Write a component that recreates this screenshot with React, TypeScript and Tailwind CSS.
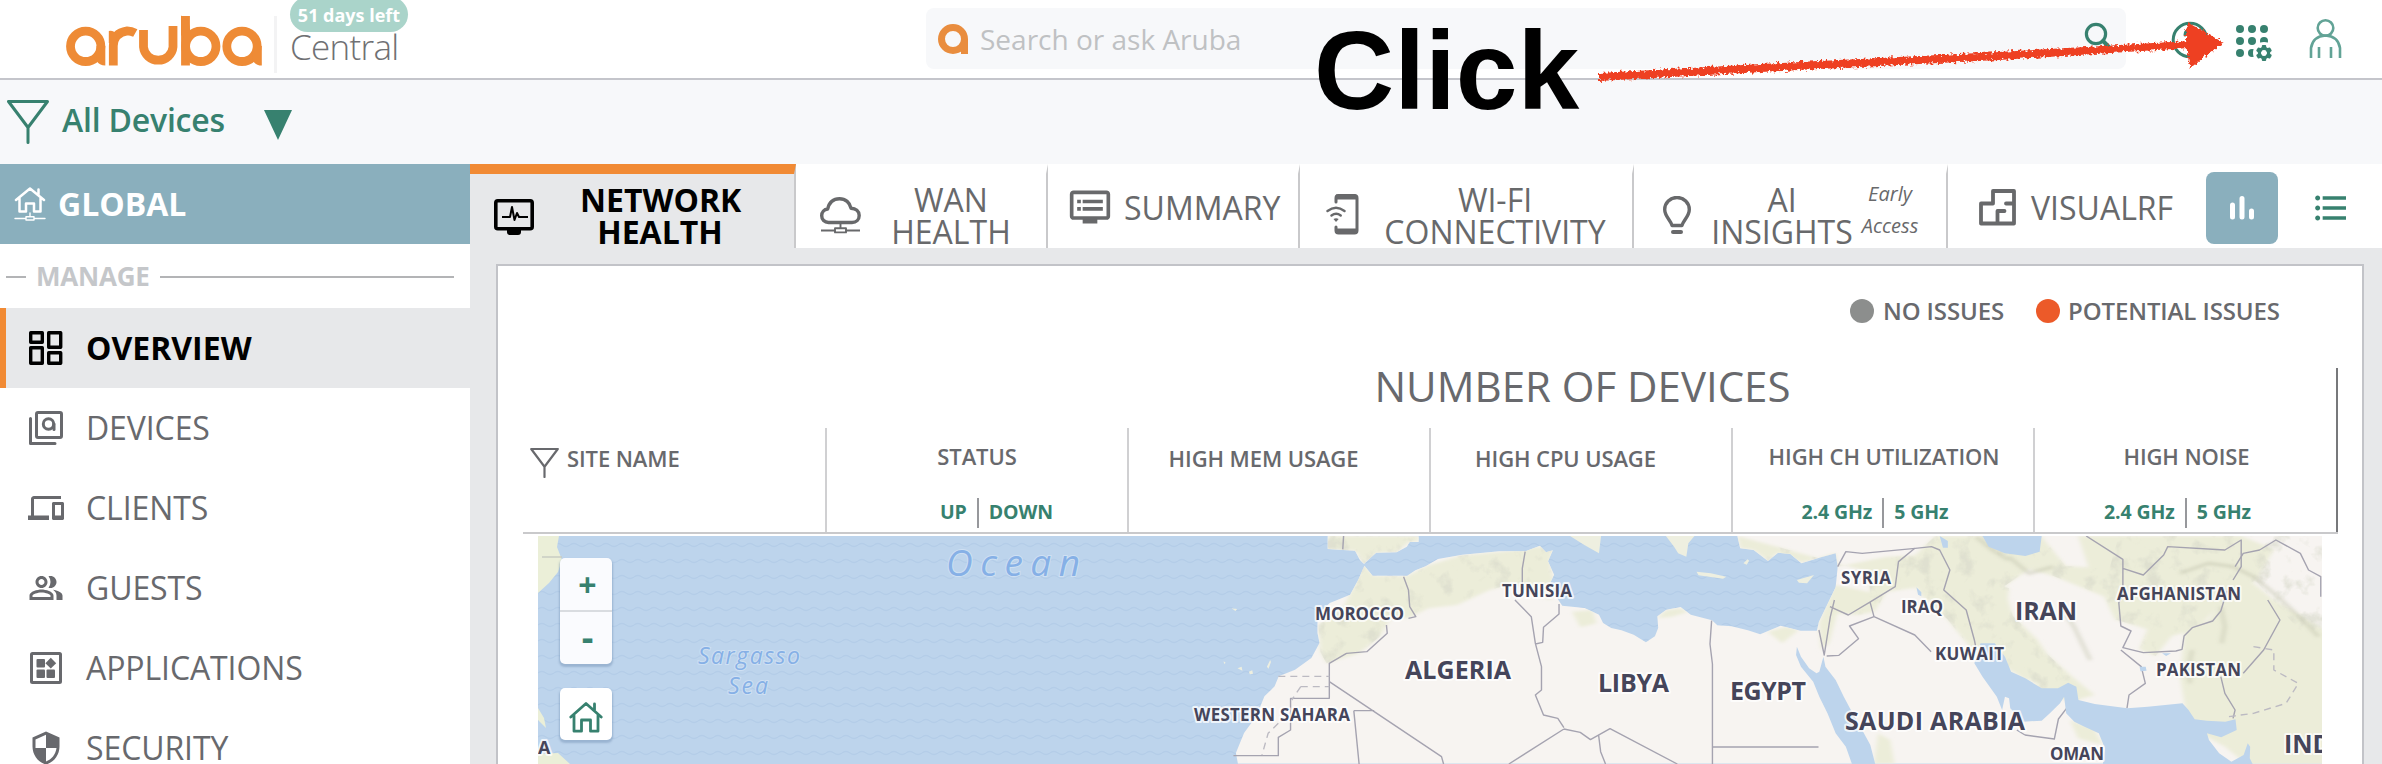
import type { ReactNode } from "react";
import { MdDvr, MdFormatListBulleted, MdOutlineDevices, MdOutlinePeopleAlt, MdSecurity } from "react-icons/md";

const font = "font-['Open_Sans','Noto_Sans',sans-serif]";

/* ---------- icons ---------- */

function ArubaLogo() {
  return (
    <svg width="198" height="52" viewBox="65 15 198 52" fill="none" stroke="#ee8b36" strokeWidth="8.8">
      <circle cx="85.7" cy="46.3" r="15.2" />
      <path d="M96.5 46h8.8v19.5q-6 0-9-5z" fill="#ee8b36" stroke="none" />
      <path d="M113.3 65.5V46q0-13 14-15.200 4 0 8 2.200" />
      <path d="M108.8 31q5-1 8 4v8h-8z" fill="#ee8b36" stroke="none" />
      <path d="M143.500 30v17a14.800 14.400 0 0 0 29.500 0V26" />
      <path d="M185.500 65.500V16" />
      <path d="M181 15.500q9 5 9 14v6h-9z" fill="#ee8b36" stroke="none" />
      <circle cx="200.800" cy="46.300" r="15.200" />
      <circle cx="242" cy="46.300" r="15.200" />
      <path d="M253 46h8.800v19.500q-6 0-9-5z" fill="#ee8b36" stroke="none" />
    </svg>
  );
}

function FunnelIcon({ size, color, sw }: { size: string; color: string; sw: number }) {
  return (
    <svg className={size} viewBox="0 0 42 44" fill="none" stroke={color} strokeWidth={sw} strokeLinejoin="round" strokeLinecap="round">
      <path d="M1.500 1.500h39L21 27.500zM21 27v15.500" />
    </svg>
  );
}

function HomeNetworkIcon() {
  return (
    <svg width="32" height="34" viewBox="14 187.500 32 34" fill="none" stroke="#fff" strokeWidth="2.500" strokeLinejoin="round" strokeLinecap="round">
      <path d="M16 200.500l14-11.500 14 11.500M38.500 195v-5M19.500 199v13h6.500v-8h8v8h6.500v-13" />
      <path d="M30 213.500v3.500M15 219h11M34 219h11M26 217.300h8v3.200h-8z" strokeWidth="1.400" />
    </svg>
  );
}

function OverviewIcon() {
  return (
    <svg width="36" height="36" viewBox="0 0 36 36" fill="none" stroke="#000" strokeWidth="3.400" strokeLinejoin="round">
      <path d="M2.700 2.700h11.600v9.600H2.700zM20.700 2.700h12v14.600h-12zM2.700 17.700h11.600v15.600H2.700zM20.700 22.700h12v10.600h-12z" />
    </svg>
  );
}

function DevicesIcon() {
  return (
    <svg width="36" height="36" viewBox="0 0 36 36" fill="none" stroke="#68696d" strokeWidth="3" strokeLinejoin="round" strokeLinecap="round">
      <rect x="8.500" y="2.500" width="25" height="25" rx="1.500" />
      <path d="M2.500 8.500v25h24.500" />
      <circle cx="20.500" cy="14" r="5.200" />
      <path d="M26 14v5.500" />
    </svg>
  );
}

function AppsIcon() {
  return (
    <svg width="34" height="34" viewBox="0 0 34 34">
      <rect x="2.500" y="2.500" width="29" height="29" rx="1" fill="none" stroke="#68696d" strokeWidth="3" />
      <g fill="#68696d">
        <rect x="7.500" y="8" width="8.500" height="8.500" rx="1" />
        <rect x="7.500" y="18.500" width="8.500" height="8.500" rx="1" />
        <rect x="17.500" y="18.500" width="8.500" height="8.500" rx="1" />
        <path d="M21.800 6.800l5.400 5.400-5.400 5.400-5.400-5.400z" />
      </g>
    </svg>
  );
}

function MonitorPulseIcon() {
  return (
    <svg width="40" height="37" viewBox="0 0 40 37" fill="none" stroke="#000">
      <rect x="1.800" y="1.800" width="36.400" height="28" rx="2" strokeWidth="3.600" />
      <path d="M13 30h14v3q0 3-3 3h-8q-3 0-3-3z" fill="#000" stroke="none" />
      <path d="M8 18h8l2-10 2.500 13 2.500-7 2 4h9" strokeWidth="2" strokeLinejoin="round" />
    </svg>
  );
}

function CloudIcon() {
  return (
    <svg width="41" height="37" viewBox="0 0 41 37" fill="none" stroke="#68696b" strokeLinejoin="round">
      <path d="M8.500 25.500c-4 0-6.800-3-6.800-6.800 0-3.700 2.500-6.300 6-6.700C9 6 13 1.700 19.500 1.700c6 0 10.500 4 11.500 9.600 4.800.2 8.200 3 8.200 7.200 0 4-3 7-7.200 7z" strokeWidth="3.400" />
      <path d="M20.500 26.500v4M1 33.500h14M26 33.500h14M15 31.200h11v4.200H15z" strokeWidth="1.900" />
    </svg>
  );
}

function PhoneWifiIcon() {
  return (
    <svg width="33" height="41" viewBox="0 0 33 41" fill="none" stroke="#68696b" strokeWidth="3" strokeLinecap="round">
      <path d="M10 8V4q0-2.500 2.500-2.500h16Q31 1.500 31 4v32.500q0 2.500-2.500 2.500h-16q-2.500 0-2.500-2.500V33" />
      <path d="M10 3h20M10 37h20" strokeWidth="5" strokeLinecap="butt" />
      <path d="M1.500 17q8.500-6.500 17 0M5.500 21.500q4.700-3.500 9.200 0" strokeWidth="2.400" />
      <path d="M7.500 25q2.600-1.600 5.200 0L10 28z" fill="#68696b" stroke="none" />
    </svg>
  );
}

function BulbIcon() {
  return (
    <svg width="28" height="39" viewBox="0 0 28 39" fill="none" stroke="#68696b" strokeWidth="3.400" strokeLinejoin="round">
      <path d="M9 29.500C8 24.500 1.700 20.500 1.700 13.500a12.300 12 0 0 1 24.600 0c0 7-6.300 11-7.300 16z" />
      <path d="M10 36h8" strokeLinecap="round" strokeWidth="4" />
    </svg>
  );
}

function FloorPlanIcon() {
  return (
    <svg width="37" height="37" viewBox="0 0 37 37" fill="none" stroke="#68696b" strokeWidth="3.800" strokeLinejoin="round">
      <path d="M2 14.500h12V2h21v32.500H2zM35 14.500h-8M18.500 34.500v-12.500h7" strokeLinecap="round" />
    </svg>
  );
}

function HouseIcon() {
  return (
    <svg width="34" height="32" viewBox="0 0 34 32" fill="none" stroke="#37816f" strokeWidth="2.800" strokeLinejoin="round" strokeLinecap="round">
      <path d="M1.800 16L17 2.500 32.200 16M25.500 9V3M5 14.500v15.700h7.500V19h9v11.200H29V14.500" />
    </svg>
  );
}

function AppGridIcon() {
  const teeth = [0, 60, 120, 180, 240, 300];
  return (
    <svg width="40" height="38" viewBox="2234 24 40 38" fill="#37816f">
      {[2240, 2252, 2264].map((x) => [29, 41, 53].map((y) => <circle key={`${x}-${y}`} cx={x} cy={y} r="4" />))}
      <circle cx="2264" cy="53" r="11" fill="#fff" />
      {teeth.map((a) => (
        <rect key={a} x="2261.800" y="45" width="4.400" height="5" rx="1" transform={`rotate(${a} 2264 53)`} />
      ))}
      <circle cx="2264" cy="53" r="4.600" fill="none" stroke="#37816f" strokeWidth="3.200" />
    </svg>
  );
}

/* ---------- top bars ---------- */

function Header() {
  return (
    <header className="flex h-[80px] border-b-2 border-[#c4c5cb] bg-white">
      <div className="mt-[15px] ml-[65px] h-[52px] w-[198px]">
        <ArubaLogo />
      </div>
      <div className="mt-[16px] ml-[11px] h-[57px] w-[3px] bg-[#f3f3f4]" />
      <div className="ml-[13px] w-[130px]">
        <div className="-mt-[3px] flex h-[35px] w-[118px] items-center justify-center rounded-full bg-[#aad4ca] pt-[2px] text-[18px] font-bold text-white">
          51 days left
        </div>
        <div className="mt-[-5px] text-[35px] leading-[40px] font-light tracking-[-0.7px] text-[#6f7073]">Central</div>
      </div>
      <div className="mt-[8px] ml-[506px] flex h-[61px] w-[1200px] rounded-[8px] bg-[#f7f8fa]">
        <svg className="mt-[16px] ml-[12px]" width="30" height="30" viewBox="0 0 30 30">
          <circle cx="15" cy="15" r="11.500" fill="none" stroke="#e98d3e" strokeWidth="7" />
          <path d="M23 15h7v15h-7z" fill="#e98d3e" />
        </svg>
        <div className="ml-[12px] text-[28px] leading-[62px] text-[#bfc1c3]">Search or ask Aruba</div>
        <svg className="mt-[14px] ml-auto mr-[12px]" width="32" height="34" viewBox="2082 22 32 34" fill="none" stroke="#37816f" strokeWidth="3.200">
          <circle cx="2096" cy="34" r="9.600" />
          <path d="M2103 41l9 9" strokeWidth="4" strokeLinecap="round" />
        </svg>
      </div>
      <svg className="mt-[21px] ml-[45px]" width="38" height="38" viewBox="2171 21 38 38" fill="none" stroke="#37816f" strokeWidth="3">
        <circle cx="2190" cy="40" r="16.800" />
        <path d="M2185 35q0-5 5-5t5 5q0 3-5 6v4" strokeLinecap="round" />
      </svg>
      <div className="mt-[24px] ml-[25px]">
        <AppGridIcon />
      </div>
      <svg className="mt-[18px] ml-[34px]" width="34" height="42" viewBox="2308 18 34 42" fill="none" stroke="#62a396" strokeWidth="2.600">
        <circle cx="2325.500" cy="28" r="7.800" />
        <path d="M2311 58V48q2-12 14.500-12.500Q2338 36 2340 48v10M2319 47v11M2331 47v11" />
      </svg>
    </header>
  );
}

function FilterBar() {
  return (
    <div className="flex h-[84px] bg-[#f7f8fa]">
      <div className="mt-[20px] ml-[7px]">
        <FunnelIcon size="h-[44px] w-[42px]" color="#37816f" sw={3} />
      </div>
      <div className="ml-[13px] w-[202px] text-[32px] leading-[80px] font-semibold tracking-[-0.2px] text-[#37816f]">All Devices</div>
      <svg className="mt-[30px]" width="28" height="30" viewBox="0 0 28 30">
        <path d="M0 0h28L14 30z" fill="#37816f" />
      </svg>
    </div>
  );
}

/* ---------- sidebar ---------- */

function NavItem({ icon, label, active = false }: { icon: ReactNode; label: string; active?: boolean }) {
  return (
    <div
      className={
        active
          ? "flex h-[80px] shrink-0 items-center border-l-[6px] border-[#f18a34] bg-[#e7e8ea] text-[32px] font-bold text-black"
          : "flex h-[80px] shrink-0 items-center border-l-[6px] border-transparent text-[32px] tracking-[-0.1px] text-[#68696d]"
      }
    >
      <div className="ml-[20px] flex w-[40px] items-center justify-center">{icon}</div>
      <div className="ml-[20px]">{label}</div>
    </div>
  );
}

function Sidebar() {
  return (
    <nav className="flex w-[470px] shrink-0 flex-col bg-white">
      <div className="flex h-[80px] shrink-0 items-center bg-[#8aafbd] pl-[14px]">
        <HomeNetworkIcon />
        <div className="ml-[12px] text-[32px] font-bold text-white">GLOBAL</div>
      </div>
      <div className="flex h-[64px] shrink-0 items-center pr-[16px] pl-[6px] text-[26px] font-bold text-[#c5c7ca]">
        <div className="mt-[2px] h-[2px] w-[20px] bg-[#b3b4b6]" />
        <div className="w-[134px] pl-[10px] leading-[64px] tracking-[-0.2px]">MANAGE</div>
        <div className="mt-[2px] h-[2px] flex-1 bg-[#b3b4b6]" />
      </div>
      <NavItem active icon={<OverviewIcon />} label="OVERVIEW" />
      <NavItem icon={<DevicesIcon />} label="DEVICES" />
      <NavItem icon={<MdOutlineDevices size={36} />} label="CLIENTS" />
      <NavItem icon={<MdOutlinePeopleAlt size={36} />} label="GUESTS" />
      <NavItem icon={<AppsIcon />} label="APPLICATIONS" />
      <NavItem icon={<MdSecurity size={36} />} label="SECURITY" />
    </nav>
  );
}

/* ---------- tabs ---------- */

function Tabs() {
  const tab = "flex shrink-0 border-t-[10px] border-r-2 border-t-white border-r-[#c9c9cb] text-center text-[32px] leading-[32px] text-[#68696b]";
  return (
    <div className="flex h-[84px] bg-white">
      <div className="flex w-[326px] shrink-0 border-t-[10px] border-r-2 border-t-[#f18a34] border-r-[#c9c9cb] bg-[#e7e8ea] text-center text-[32px] leading-[32px] font-bold text-black">
        <div className="mt-[25px] ml-[24px]"><MonitorPulseIcon /></div>
        <div className="mt-[10px] ml-[46px] w-[160px]">NETWORK HEALTH</div>
      </div>
      <div className={`${tab} w-[252px]`}>
        <div className="mt-[23px] ml-[24px]"><CloudIcon /></div>
        <div className="mt-[10px] ml-[30px] w-[120px]">WAN HEALTH</div>
      </div>
      <div className={`${tab} w-[252px]`}>
        <div className="mt-[11px] ml-[20px]"><MdDvr size={44} /></div>
        <div className="mt-[18px] ml-[12px]">SUMMARY</div>
      </div>
      <div className={`${tab} w-[334px]`}>
        <div className="mt-[20px] ml-[26px]"><PhoneWifiIcon /></div>
        <div className="mt-[10px] ml-[24px] w-[224px]">WI-FI CONNECTIVITY</div>
      </div>
      <div className={`${tab} w-[314px]`}>
        <div className="mt-[22px] ml-[29px]"><BulbIcon /></div>
        <div className="mt-[10px] ml-[20px] w-[142px]">AI INSIGHTS</div>
        <div className="mt-[4px] ml-[7px] w-[60px] text-[20px] italic">Early Access</div>
      </div>
      <div className="flex shrink-0 text-[32px] leading-[32px] text-[#68696b]">
        <div className="mt-[25px] ml-[31px]"><FloorPlanIcon /></div>
        <div className="mt-[28px] ml-[15px] w-[175px]">VISUALRF</div>
        <div className="mt-[8px] flex h-[72px] w-[72px] items-center justify-center rounded-[8px] bg-[#8aafbd]">
          <svg width="26" height="26" viewBox="0 0 26 26" stroke="#fff" strokeWidth="5" strokeLinecap="round">
            <path d="M3.500 10v12M13 3.500V22M22.500 16v6" />
          </svg>
        </div>
        <div className="mt-[24px] ml-[33px] text-[#37816f]"><MdFormatListBulleted size={40} /></div>
      </div>
    </div>
  );
}

/* ---------- map ---------- */

const labels: [string, number, number, number, number][] = [
  ["MOROCCO", 1315, 620, 89, 17],
  ["TUNISIA", 1502, 597, 70, 17],
  ["ALGERIA", 1405, 679, 106, 25],
  ["LIBYA", 1598, 692, 71, 25],
  ["EGYPT", 1730, 700, 76, 25],
  ["WESTERN SAHARA", 1194, 721, 156, 17],
  ["SYRIA", 1841, 584, 50, 17],
  ["IRAQ", 1901, 613, 42, 17],
  ["IRAN", 2015, 620, 62, 25],
  ["KUWAIT", 1935, 660, 69, 17],
  ["AFGHANISTAN", 2117, 600, 124, 17],
  ["PAKISTAN", 2156, 676, 85, 17],
  ["SAUDI ARABIA", 1845, 730, 180, 25],
  ["OMAN", 2050, 760, 54, 17],
  ["IND", 2284, 753, 47, 25],
  ["A", 538, 754, 12, 18],
];

const greenAreas = [
  "M500 195l25 32 80 2 50-32 80-30 100-12 95-15 30 10-2 60 10 40-10 50-50-20-40-30-60 20-80 45-70 10-50 30-40-5-30 60-50 50-80 30-15-35-5-80 60-50z",
  "M411 108v39l67 5 22 40 30-34 50-1 32-32 22-2v-15z",
  "M1010 335l50-5 10 40-40 12z",
  "M1218 355l22-25 35-5 20 10-40 15z",
  "M1490 395l45-15 30 10-40 40z",
  "M1415 108l7 37 33 5 35 33 25-25 57 30 84-28 5 40 120-30 100-5 120 20 20 60 60 20-10 100 70 60 90 100 60 60-60 20-70-30-110-160-60-80-30-120-60 40-120 20-30 60-40 10 30-60-5-70z",
  "M1650 255l30 5 90 25-60 60-50-5-20 90-20 20-5-80z",
  "M1900 108h260l60 90 130 10 10 60-30 30-140-70-60-20-60 50 20 90 60 70 60 110-20 30-70-20-80-60-50-30-60-90-70-80-20-100z",
  "M2350 108h300l80 40-40 90-60 40-50 60-40 50-60 20-40 60-40-20 20-60-80-30-30-80z",
  "M2250 108h200l-30 40-70 70-70 0z",
  "M2510 400l60-40 60-100 40-20 60 60 140 100v400h-200l-60-60-90-60-20-150z",
  "M2230 660l60 25 20 50-60-20z",
  "M1760 700l30 20 10 72h-50z",
];

const reliefAreas = [5, 7, 8, 0, 1].map((i) => greenAreas[i]).concat("M2630 108h220v320l-60-40-100-140-60-60z");

const ridges = [
  "M2500 220l70-30 60 10 50 30 60 60 60 70 40 50",
  "M2080 170l50 50 60-20",
  "M2210 320l30 60 40 100",
  "M2000 110l40 40 40 30",
  "M2600 320l10 60-8 50M2530 450l-10 60 5 40",
];

const borders = [
  "M450 108l-2 40",
  "M597 230l12 40 3 50 15 30-18 5",
  "M555 375l2 25-50 55-50 5-42 30v105h-95v95l-30 22v55h-110",
  "M415 545l275 225 5 22M475 632h50M475 632l13 160",
  "M895 155l-7 50 0 80M870 300l40 50 10 80 15 70v70l-15 15 20 60 35 10 15 28M978 312v30l-38 40-2 45-18 5",
  "M990 687l-135 105M990 687l40 10 25 22 48-33 165 106M1075 705l5 50 12 37",
  "M1352 362l-4 70 6 60v300M1354 741h260",
  "M1661 200l20-45 40 5 130-15 40-5 20 10 25 60-15 60 55 60 20 90 5 30",
  "M1850 145l-40 40-8 75-60 45-55 40-45-25M1740 305l10 45 100 55 40 50M1750 350l-60 28 22 38-48 50-30 2",
  "M1615 390l13 75 15-115 10-50",
  "M2120 705l72 12 10-60 25-40-5-35M2120 705l-20-15",
  "M2270 108l90 70v110l-10 20 5 70 25 15-20 50 50 15 80-5 15-5 5-40 20-25 50-20 20-30 15-60M2360 205l50 20 50-60 10-25 140 10 40-30 0 80-20 40",
  "M2355 450l50 50 10 50-40 35-5 40",
  "M2655 520l50-70 40-90-30-60M2600 530l10 50 25 50-5 25",
  "M2635 200l20-40 40-10 40-30 60 40 20 50 30 20 0 60",
];

const dashes = ["M290 529h125M345 560h70M345 560l-22 40M290 670l-25 30-15 65", "M2680 440l50 10 0 60 60 40-30 60-80 30-60 10"];

function WorldMap() {
  return (
    <svg className="block" width="1784" height="228" viewBox="538 536 1784 228">
      <defs>
        <pattern id="waves" width="16" height="16" patternUnits="userSpaceOnUse" patternTransform="translate(538 536)">
          <path d="M0 9q4-3 8 0t8 0" fill="none" stroke="#b4cde8" strokeWidth="1.300" />
        </pattern>
        <filter id="soft" x="-10%" y="-10%" width="120%" height="120%"><feGaussianBlur stdDeviation="5" /></filter>
        <filter id="relief" x="0" y="0" width="100%" height="100%">
          <feTurbulence type="fractalNoise" baseFrequency="0.022 0.018" numOctaves="4" seed="7" result="n" />
          <feColorMatrix in="n" values="0 0 0 0 0.680  0 0 0 0 0.690  0 0 0 0 0.590  0 4 0 0 -2.150" result="c" />
          <feComposite in="c" in2="SourceGraphic" operator="in" />
        </filter>
        <clipPath id="land">
          <path d="M411 108v39l67 5 12 28 10 12 12-14 18-20 50-1 25-17 7-14h22v-17zM1415 108l7 37 33 5 35 33 25-25 30 4 27 28 48-18 36-12 5 40-5 62-21 53-20 50-5 27h-40l-49-15-50 26-30-12-40-12-35-3-13-15-52-17-25-23-35 8-22 20 2 35-8 25-22 18-30-23-30-13-25-7-20-15-10-25-35-20-55-7-10-18-20-50 10-25-15-40 12-33-17 6-15-20-35 17-65 0-90 10-60 13-30 22-25 12-20 16-15 0h-70l-20-30-15 42-20 45-50 25-30 35v55l5 30-20 45-40 35-40 20-10 30-25 30-20 60-30 50-20 60 5 32h2710v-684z" />
        </clipPath>
      </defs>
      <rect x="538" y="536" width="1784" height="228" fill="#bdd4ec" />
      <rect x="538" y="536" width="1784" height="228" fill="url(#waves)" />
      <g transform="translate(1160 500) scale(0.408 0.33333)">
        <g clipPath="url(#land)">
          <rect x="180" y="100" width="2800" height="700" fill="#f7f4f1" />
          <g filter="url(#soft)" fill="#ecedd9">
            {greenAreas.map((d) => <path key={d} d={d} />)}
          </g>
          <g filter="url(#relief)" opacity="0.600">
            {reliefAreas.map((d) => <path key={d} d={d} />)}
          </g>
          <g fill="none" stroke="#c3c4ae" strokeWidth="10" opacity="0.500" filter="url(#soft)">
            {ridges.map((d) => <path key={d} d={d} />)}
          </g>
        </g>
        <g fill="#eeefe0">
          <path d="M1005 108l35 27 36 25 5-52zM1240 108l20 32 10 20 20 10 5-40 15-22z" />
          <path d="M1315 215l35 5 38 10-8 6-60-10zM1561 240l42-15-17 25-20-2zM1430 190l10-12 4 4-6 12z" />
          <path d="M175 325l14 2-4 6zM190 505l10-5 2 12zM218 515l8-4 2 10-8 2zM262 500l8-20 2 6-6 20zM156 484l5 4-4 4z" />
        </g>
        <g fill="none" stroke="#a5a3b0" strokeLinejoin="round" strokeWidth="1.400">
          {borders.map((d) => <path key={d} d={d} vectorEffect="non-scaling-stroke" />)}
          {dashes.map((d) => <path key={d} d={d} vectorEffect="non-scaling-stroke" strokeDasharray="7 5" stroke="#bcbac2" />)}
        </g>
        <g transform="translate(1421 0)" fill="#bdd4ec">
          <path d="M140 440l10 30 20 35 18 15 7-5 10-45 5 30 25 40 20 50 15 35 30 65 20 45 12 57h-57l-15-52-25-40-20-60-20-50-15-45-30-45-12-35z" />
          <path d="M590 430l35 0 25 40 15 45 35 20 40 30 40 0 25-17 20 12 5 40 40 12 80 13 50-5 85-10 15 20 15 28 30 4 45 3 25-7 3 32-38 22-35-12 5 20 25 40 30 25 30-20 10-35 6 10-1 35 7 17h-367l5-47-15-45-35-20-25-15-20-25-5-50-10 20-25 30-20 22-45 3-20-25-12-15-3-30-10-5-7 40-13-40-35-60-20-40z" />
          <path d="M595 108l15 32 40 20 50 8 35-13 5-47zM490 108l20 15 0 20-12 0zM433 262l12 15 0 12-8-5zM980 500l15 0 2 12-15 2zM1035 460l22 0-12 8z" />
        </g>
      </g>
      <path d="M538 536h21l-2 11 5 13-4 12-9 11-11 10zM538 754l20-1 12 11h-32zM538 708l6 10 2 10-8-8z" fill="#ebefd8" />
      <path d="M542 557h20" stroke="#c9ccc3" strokeWidth="1.500" />
      <g fontFamily="Open Sans, sans-serif" fontWeight="700" fill="#45455a" stroke="#ffffff" strokeOpacity="0.750" strokeWidth="4" strokeLinejoin="round" paintOrder="stroke">
        {labels.map(([t, x, y, w, s]) => (
          <text key={t} x={x} y={y} fontSize={s} textLength={w}>{t}</text>
        ))}
      </g>
      <g fontFamily="Open Sans, sans-serif" fontStyle="italic" fill="#86b0e6" stroke="#cfe0f3" strokeWidth="2" paintOrder="stroke">
        <text x="946" y="576" fontSize="37" textLength="134">Ocean</text>
        <text x="698" y="664" fontSize="23" textLength="102">Sargasso</text>
        <text x="728" y="694" fontSize="23" textLength="40">Sea</text>
      </g>
    </svg>
  );
}

function MapControls() {
  return (
    <div className="absolute top-[22px] left-[22px] flex w-[52px] flex-col text-center font-bold text-[#37816f]">
      <div className="rounded-[5px] bg-[#fafbfe] shadow-[0_2px_2px_1px_rgba(90,120,160,0.35)]">
        <div className="h-[52px] pl-[3px] text-[32px] leading-[54px]">+</div>
        <div className="h-[54px] border-t-2 border-[#d9dce0] pl-[3px] text-[36px] leading-[50px]">-</div>
      </div>
      <div className="mt-[24px] flex h-[52px] items-center justify-center rounded-[5px] bg-white pt-[5px] shadow-[0_2px_2px_1px_rgba(90,120,160,0.35)]">
        <HouseIcon />
      </div>
    </div>
  );
}

/* ---------- table header ---------- */

function Split({ left, right, className }: { left: string; right: string; className: string }) {
  return (
    <div className={`flex h-[30px] text-[19.5px] leading-[27px] font-bold text-[#37816f] ${className}`}>
      <span>{left}</span>
      <span className="mx-[10px] w-[2px] bg-[#97989c]" />
      <span>{right}</span>
    </div>
  );
}

function Panel() {
  const cell = "flex w-[302px] shrink-0 flex-col items-center border-r-2 border-[#d0d0d2]";
  return (
    <section className="mt-[16px] ml-[26px] flex h-[520px] w-[1868px] flex-col border-2 border-[#c2c3c8] bg-white">
      <div className="mt-[30px] flex h-[30px] items-center pl-[1352px] text-[24px] font-semibold text-[#68696d]">
        <span className="h-[24px] w-[24px] rounded-full bg-[#8c8e8d]" />
        <span className="ml-[9px] w-[153px] tracking-[-0.1px]">NO ISSUES</span>
        <span className="h-[24px] w-[24px] rounded-full bg-[#ec5a29]" />
        <span className="ml-[8px] tracking-[-0.1px]">POTENTIAL ISSUES</span>
      </div>
      <div className="mt-[42px] ml-[25px] h-[164px] w-[1815px] border-r-2 border-[#77787b]">
        <div className="h-[60px] pl-[306px] text-center text-[42px] leading-[36px] text-[#68696d]">NUMBER OF DEVICES</div>
        <div className="flex h-[104px] text-[22px] leading-[24px] font-semibold tracking-[-0.1px] text-[#68696d]">
          <div className="flex w-[304px] shrink-0 border-r-2 border-[#d0d0d2]">
            <div className="mt-[20px] ml-[7px]"><FunnelIcon size="h-[30px] w-[29px]" color="#68696d" sw={3.2} /></div>
            <div className="mt-[18px] ml-[8px]">SITE NAME</div>
          </div>
          <div className={cell}>
            <div className="mt-[16px]">STATUS</div>
            <Split left="UP" right="DOWN" className="mt-[30px] ml-[39px]" />
          </div>
          <div className={cell}><div className="mt-[18px] mr-[31px]">HIGH MEM USAGE</div></div>
          <div className={cell}><div className="mt-[18px] mr-[31px]">HIGH CPU USAGE</div></div>
          <div className={cell}>
            <div className="mt-[16px] ml-[2px]">HIGH CH UTILIZATION</div>
            <Split left="2.4 GHz" right="5 GHz" className="mt-[30px] mr-[16px]" />
          </div>
          <div className="flex w-[301px] shrink-0 flex-col items-center">
            <div className="mt-[16px] ml-[2px]">HIGH NOISE</div>
            <Split left="2.4 GHz" right="5 GHz" className="mt-[30px] mr-[16px]" />
          </div>
        </div>
      </div>
      <div className="ml-[25px] h-[2px] w-[1815px] bg-[#c9c9cb]" />
      <div className="relative mt-[2px] ml-[40px] h-[228px] w-[1784px] overflow-hidden">
        <WorldMap />
        <MapControls />
      </div>
    </section>
  );
}

/* ---------- annotation ---------- */

function Annotation() {
  return (
    <div className="pointer-events-none absolute top-0 left-[1312px] h-[140px] w-[920px]">
      <div className="absolute top-[9px] left-[2px] font-['Liberation_Sans',Arial,sans-serif] text-[111px] leading-[124px] font-bold text-black">Click</div>
      <svg className="absolute top-0 left-0" width="920" height="140" viewBox="1312 0 920 140">
        <defs>
          <filter id="chalk" x="-5%" y="-40%" width="110%" height="180%">
            <feTurbulence type="fractalNoise" baseFrequency="0.350" numOctaves="2" seed="4" result="n" />
            <feDisplacementMap in="SourceGraphic" in2="n" scale="7" xChannelSelector="R" yChannelSelector="G" />
          </filter>
        </defs>
        <g filter="url(#chalk)" fill="#ee4024">
          <path d="M1599 73l200-11 200-10 190-11v7l-190 12-200 10-200 11z" />
          <path d="M2188 23l34 20-31 23q-6-20-3-43z" stroke="#ee4024" strokeWidth="2" />
        </g>
      </svg>
    </div>
  );
}

export default function App() {
  return (
    <div className={`relative flex h-[764px] w-[2382px] flex-col overflow-hidden bg-white ${font}`}>
      <Header />
      <FilterBar />
      <div className="flex min-h-0 flex-1">
        <Sidebar />
        <main className="w-[1912px] shrink-0 overflow-hidden bg-[#e7e8ea]">
          <Tabs />
          <Panel />
        </main>
      </div>
      <Annotation />
    </div>
  );
}
